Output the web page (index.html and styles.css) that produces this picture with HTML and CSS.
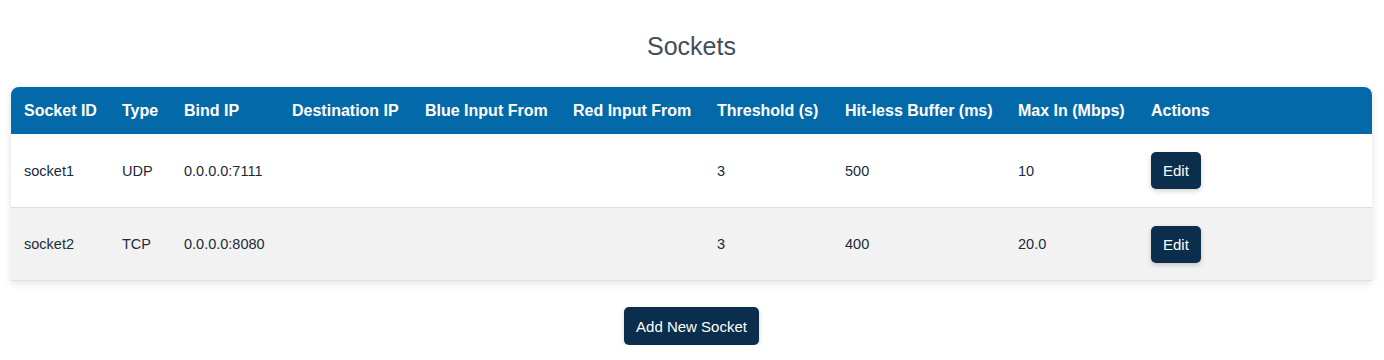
FILE: index.html
```html
<!DOCTYPE html>
<html>
<head>
<meta charset="utf-8">
<link rel="stylesheet" href="styles.css">
</head>
<body>
<div class="page">
  <h2 class="title">Sockets</h2>
  <table class="sockets">
    <colgroup>
      <col class="c1"><col class="c2"><col class="c3"><col class="c4"><col class="c5">
      <col class="c6"><col class="c7"><col class="c8"><col class="c9"><col class="c10">
    </colgroup>
    <thead>
      <tr>
        <th>Socket ID</th><th>Type</th><th>Bind IP</th><th>Destination IP</th><th>Blue Input From</th>
        <th>Red Input From</th><th>Threshold (s)</th><th>Hit-less Buffer (ms)</th><th>Max In (Mbps)</th><th>Actions</th>
      </tr>
    </thead>
    <tbody>
      <tr>
        <td>socket1</td><td>UDP</td><td>0.0.0.0:7111</td><td></td><td></td>
        <td></td><td>3</td><td>500</td><td>10</td><td><button class="btn">Edit</button></td>
      </tr>
      <tr class="alt">
        <td>socket2</td><td>TCP</td><td>0.0.0.0:8080</td><td></td><td></td>
        <td></td><td>3</td><td>400</td><td>20.0</td><td><button class="btn">Edit</button></td>
      </tr>
    </tbody>
  </table>
  <div class="footer">
    <button class="btn add">Add New Socket</button>
  </div>
</div>
</body>
</html>
```
FILE: styles.css
```css
html, body {
  margin: 0;
  padding: 0;
  background: #ffffff;
  font-family: "Liberation Sans", Arial, Helvetica, sans-serif;
}
.page {
  padding: 0 12px 0 11px;
}
.title {
  margin: 0;
  padding-top: 31px;
  height: 30px;
  line-height: 30px;
  text-align: center;
  font-size: 25px;
  font-weight: 400;
  color: #454c57;
}
.sockets {
  margin-top: 26px;
  width: 1361px;
  border-collapse: separate;
  border-spacing: 0;
  table-layout: fixed;
  border-radius: 8px 8px 0 0;
  overflow: hidden;
  box-shadow: 0 2px 8px rgba(0, 0, 0, 0.12);
}
.c1 { width: 98px; }
.c2 { width: 62px; }
.c3 { width: 108px; }
.c4 { width: 133px; }
.c5 { width: 148px; }
.c6 { width: 144px; }
.c7 { width: 128px; }
.c8 { width: 173px; }
.c9 { width: 133px; }
.c10 { width: auto; }
.sockets th {
  background: #0469a9;
  color: #ffffff;
  font-size: 16px;
  font-weight: 700;
  text-align: left;
  height: 47px;
  padding: 0 13px;
  box-sizing: border-box;
  white-space: nowrap;
}
.sockets td {
  font-size: 14.5px;
  color: #1b2b3a;
  padding: 0 13px;
  height: 74px;
  box-sizing: border-box;
  background: #ffffff;
  border-bottom: 1px solid #dcdcdc;
  white-space: nowrap;
}
.sockets tr.alt td {
  background: #f2f2f2;
  height: 73px;
  border-bottom: 1px solid #e2e2e2;
}
.btn {
  font-family: "Liberation Sans", Arial, Helvetica, sans-serif;
  background: #0a2e4b;
  color: #ffffff;
  border: none;
  border-radius: 5px;
  height: 37px;
  padding: 0 12px;
  font-size: 15px;
  box-shadow: 0 2px 5px rgba(0, 0, 0, 0.18);
  cursor: pointer;
}
.footer {
  display: flex;
  justify-content: center;
  padding-top: 26px;
}
.btn.add {
  height: 38px;
  padding: 0 12px;
}
```
